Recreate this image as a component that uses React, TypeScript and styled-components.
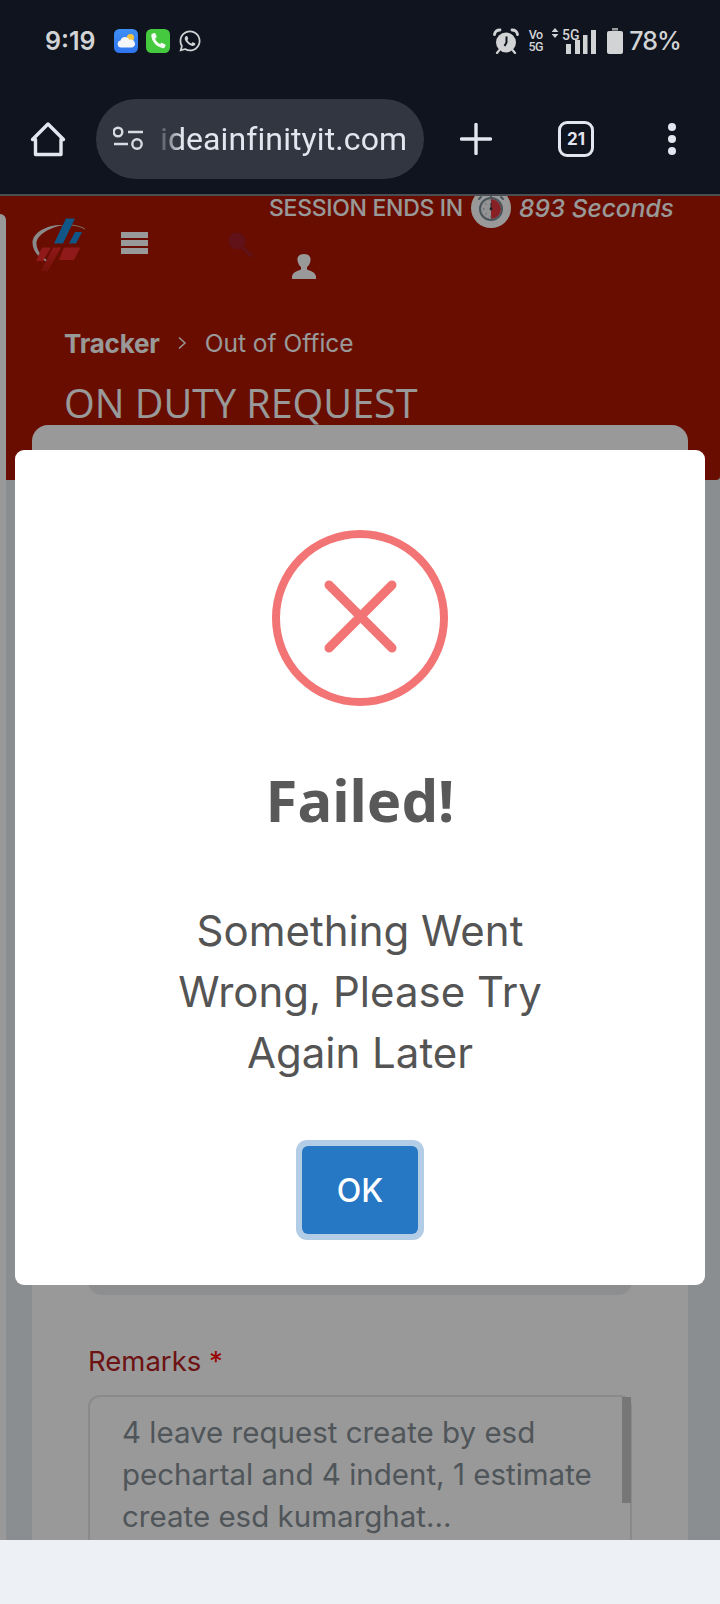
import React from "react";
import styled, { createGlobalStyle } from "styled-components";
import { FaWhatsapp } from "react-icons/fa";

const Global = createGlobalStyle`
  html, body { margin: 0; padding: 0; background: #edf0f4; }
  * { box-sizing: border-box; }
`;

const Screen = styled.div`
  width: 720px;
  height: 1604px;
  display: flex;
  flex-direction: column;
  overflow: hidden;
  font-family: Inter, "Noto Sans", sans-serif;
`;

const Chrome = styled.header`
  position: relative;
  z-index: 2;
  height: 196px;
  flex: none;
  background: #0f141e;
  border-bottom: 2px solid #4a4d52;
`;

const StatusBar = styled.div`
  height: 82px;
  display: flex;
  align-items: center;
  padding: 0 39px 0 45px;
  color: #d2d3d5;
`;

const Clock = styled.span`
  font-size: 25px;
  font-weight: 600;
  width: 52px;
  margin-right: 17px;
  white-space: nowrap;
`;

const AppIcon = styled.svg`
  width: 24px;
  height: 24px;
  margin-right: 8px;
  flex: none;
`;

const WhatsApp = styled(FaWhatsapp)`
  width: 24px;
  height: 24px;
  color: #d2d3d5;
`;

const StatusRight = styled.div`
  margin-left: auto;
  display: flex;
  align-items: center;
`;

const VoStack = styled.div`
  width: 15px;
  margin: 0 9px;
  font-family: Roboto, sans-serif;
  font-size: 12.5px;
  font-weight: 500;
  line-height: 12px;
  display: flex;
  flex-direction: column;
  align-items: center;
  letter-spacing: -0.5px;
`;

const NetIcon = styled.svg`
  width: 44px;
  height: 26px;
  margin-right: 11px;
`;

const BatteryIcon = styled.svg`
  width: 16px;
  height: 26px;
  margin-right: 6px;
`;

const Percent = styled.span`
  font-size: 25px;
  font-weight: 500;
  letter-spacing: -0.9px;
  white-space: nowrap;
`;

const Toolbar = styled.div`
  height: 112px;
  display: flex;
  align-items: center;
  padding: 2px 0 0 28px;
  color: #e3e6ee;
`;

const HomeIcon = styled.svg`
  width: 40px;
  height: 40px;
  margin-right: 28px;
  flex: none;
`;

const UrlPill = styled.div`
  width: 328px;
  height: 80px;
  border-radius: 40px;
  background: #323640;
  display: flex;
  align-items: center;
  padding-left: 17px;
  margin-right: 36px;
  flex: none;
`;

const TuneIcon = styled.svg`
  width: 32px;
  height: 26px;
  margin-right: 15px;
  flex: none;
`;

const UrlText = styled.span`
  font-family: Roboto, sans-serif;
  font-size: 32px;
  letter-spacing: 0.1px;
  color: #e3e6ee;
  white-space: nowrap;
  -webkit-mask-image: linear-gradient(90deg, rgba(0,0,0,.15) 0, #000 22px);
  mask-image: linear-gradient(90deg, rgba(0,0,0,.15) 0, #000 22px);
`;

const PlusIcon = styled.svg`
  width: 32px;
  height: 32px;
  margin-right: 66px;
  flex: none;
`;

const TabCount = styled.div`
  width: 36px;
  height: 36px;
  border: 3.5px solid #e3e6ee;
  border-radius: 9px;
  display: flex;
  align-items: center;
  justify-content: center;
  font-size: 17px;
  font-weight: 700;
  margin-right: 74px;
  flex: none;
`;

const MoreDots = styled.div`
  display: flex;
  flex-direction: column;
  gap: 4px;
`;

const Dot = styled.span`
  width: 8px;
  height: 8px;
  border-radius: 50%;
  background: #e3e6ee;
`;

const Viewport = styled.main`
  flex: 1;
  min-height: 0;
  position: relative;
  background: #e8edf2;
`;

const SideStrip = styled.div`
  position: absolute;
  top: 18px;
  bottom: 0;
  left: 0;
  width: 6px;
  background: #fff;
  border-top-right-radius: 10px;
`;

const Hero = styled.section`
  height: 284px;
  background: #ad1600;
  border-radius: 0 0 4px 4px;
  color: #fff;
`;

const SessionRow = styled.div`
  height: 32px;
  padding: 1px 0 0 269px;
  display: flex;
  align-items: flex-start;
  font-size: 23px;
  font-weight: 500;
  line-height: 22px;
  white-space: nowrap;
`;

const SessionLabel = styled.span`
  width: 202px;
  letter-spacing: -0.3px;
`;

const TimerIcon = styled.svg`
  width: 40px;
  height: 40px;
  flex: none;
  margin: -9px 8px 0 0;
`;

const SessionTime = styled.em`
  font-size: 24.5px;
`;

const NavRow = styled.div`
  display: flex;
  align-items: flex-start;
  padding-left: 32px;
  margin-top: -11px;
  height: 110px;
`;

const Logo = styled.svg`
  width: 54px;
  height: 56px;
  margin-right: 35px;
  flex: none;
`;

const MenuIcon = styled.div`
  width: 27px;
  margin-top: 15px;
  margin-right: 79px;
  display: flex;
  flex-direction: column;
  gap: 2px;
  flex: none;
`;

const MenuBar = styled.span`
  height: 6px;
  background: #fff;
`;

const SearchIcon = styled.svg`
  width: 26px;
  height: 26px;
  margin-top: 14px;
  margin-right: 38px;
  flex: none;
`;

const PersonIcon = styled.svg`
  width: 26px;
  height: 28px;
  margin-top: 36px;
  flex: none;
`;

const Crumbs = styled.nav`
  display: flex;
  align-items: center;
  height: 36px;
  padding-left: 64px;
  font-size: 24.5px;
  margin-top: -2px;
`;

const CrumbRoot = styled.b`
  font-size: 26px;
  font-weight: 700;
  letter-spacing: -0.2px;
`;

const CrumbSep = styled.svg`
  width: 12px;
  height: 14px;
  margin: 0 17px 0 16px;
`;

const PageTitle = styled.h1`
  margin: 20px 0 0 64px;
  font-family: "Open Sans", sans-serif;
  font-weight: 400;
  font-size: 39.5px;
  line-height: 44px;
  white-space: nowrap;
`;

const Card = styled.section`
  position: relative;
  margin: -55px 32px 0;
  height: 1140px;
  background: #fff;
  border-radius: 16px 16px 0 0;
  padding: 30px 56px 0;
`;

const FilledField = styled.div`
  height: 840px;
  background: #e9edf0;
  border-radius: 14px;
`;

const FieldLabel = styled.label`
  display: block;
  margin-top: 49px;
  height: 34px;
  font-size: 27.5px;
  line-height: 34px;
  color: #b52020;
`;

const Required = styled.span`
  color: #ff0000;
`;

const TextBox = styled.div`
  position: relative;
  margin-top: 17px;
  height: 170px;
  border: 2px solid #e6e6e6;
  border-radius: 12px;
  padding: 14px 0 0 32px;
  font-size: 29.5px;
  line-height: 42px;
  color: #848e95;
  white-space: nowrap;
`;

const ScrollThumb = styled.span`
  position: absolute;
  top: 0;
  right: -1px;
  width: 9px;
  height: 106px;
  background: #c6c6c6;
`;

const Backdrop = styled.div`
  position: absolute;
  inset: 0;
  background: rgba(0, 0, 0, 0.4);
  display: flex;
  align-items: center;
  justify-content: center;
  padding-bottom: 1px;
`;

const Modal = styled.div`
  width: 690px;
  height: 835px;
  background: #fff;
  border-radius: 9px;
  display: flex;
  flex-direction: column;
  align-items: center;
  padding-top: 80px;
`;

const ErrorIcon = styled.svg`
  width: 176px;
  height: 176px;
  flex: none;
`;

const ModalTitle = styled.h2`
  margin: 54px 0 0;
  font-family: "Noto Sans", sans-serif;
  font-weight: 700;
  font-size: 58px;
  line-height: 80px;
  color: #595959;
`;

const ModalText = styled.p`
  margin: 60px 0 0;
  font-size: 42px;
  line-height: 61px;
  font-weight: 400;
  text-align: center;
  color: #545454;
`;

const OkRing = styled.div`
  margin-top: 57px;
  padding: 6px;
  background: #b3cde6;
  border-radius: 11px;
`;

const OkButton = styled.button`
  display: block;
  width: 116px;
  height: 88px;
  border: 0;
  border-radius: 6px;
  background: #2778c4;
  color: #fff;
  font-family: Inter, sans-serif;
  font-weight: 500;
  font-size: 32px;
  padding: 0;
`;

const BottomBar = styled.footer`
  position: relative;
  z-index: 2;
  height: 64px;
  flex: none;
  background: #edf0f4;
`;

export default function App() {
  return (
    <Screen>
      <Global />
      <Chrome>
        <StatusBar>
          <Clock>9:19</Clock>
          <AppIcon viewBox="0 0 24 24">
            <defs>
              <linearGradient id="wx" x1="0" y1="0" x2="0" y2="1">
                <stop offset="0" stopColor="#3f8ff5" />
                <stop offset="1" stopColor="#2f74ee" />
              </linearGradient>
            </defs>
            <rect width="24" height="24" rx="5.5" fill="url(#wx)" />
            <circle cx="16.5" cy="8.5" r="3.6" fill="#f9c440" />
            <path d="M7 18.5a3.6 3.6 0 0 1-.5-7.1 4.8 4.8 0 0 1 9-.6 3.9 3.9 0 0 1 2.7 7.7Z" fill="#f3f5f9" />
          </AppIcon>
          <AppIcon viewBox="0 0 24 24">
            <rect width="24" height="24" rx="5.5" fill="#45c93e" />
            <path d="M6.2 4.8l2-.8c.6-.2 1 0 1.200.5l1.200 3c.2.5 0 .9-.4 1.200l-1.100.8c.8 2.400 2.500 4.400 5 5.600l1-1c.4-.4.9-.4 1.300-.2l2.700 1.600c.5.300.6.700.4 1.200l-.9 1.800c-.3.600-.8.800-1.400.700C10.400 18 5.300 12.200 5.300 6c0-.6.300-1 .9-1.200Z" fill="#f4fbf2" />
          </AppIcon>
          <WhatsApp />
          <StatusRight>
            <svg width="26" height="26" viewBox="0 0 26 26">
              <circle cx="13" cy="14.500" r="10" fill="#d2d3d5" />
              <path d="M1.500 6.500C2 3.500 4 2 7 2M24.500 6.500C24 3.500 22 2 19 2" stroke="#d2d3d5" strokeWidth="2.800" fill="none" strokeLinecap="round" />
              <path d="M6 22.500 4 25M20 22.500 22 25" stroke="#d2d3d5" strokeWidth="2.200" strokeLinecap="round" />
              <path d="M13.500 8.500V14.500L11.500 18" stroke="#0f141e" strokeWidth="2" fill="none" />
            </svg>
            <VoStack>
              <span>Vo</span>
              <span>5G</span>
            </VoStack>
            <NetIcon viewBox="0 0 44 26">
              <path d="M3 0 6.500 4H-.5ZM3 10-.5 6H6.500Z" fill="#d2d3d5" />
              <text x="10" y="11.500" fontFamily="Roboto, sans-serif" fontSize="14" fontWeight="500" fill="#d2d3d5">5G</text>
              <rect x="14" y="16" width="5" height="10" fill="#d2d3d5" />
              <rect x="23" y="12" width="5" height="14" fill="#d2d3d5" />
              <rect x="31" y="7" width="4.500" height="19" fill="#d2d3d5" />
              <rect x="39" y="2" width="5" height="24" fill="#d2d3d5" />
            </NetIcon>
            <BatteryIcon viewBox="0 0 16 26">
              <path d="M5 0h6v2.500h-6Z" fill="#9a9b9e" />
              <path d="M2 3h12a2 2 0 0 1 2 2v19a2 2 0 0 1-2 2H2a2 2 0 0 1-2-2V5a2 2 0 0 1 2-2Z" fill="#d2d3d5" />
            </BatteryIcon>
            <Percent>78%</Percent>
          </StatusRight>
        </StatusBar>
        <Toolbar>
          <HomeIcon viewBox="0 0 40 40">
            <path d="M7.500 35.500V20.500H4.500L20 5L35.500 20.500H33V35.500Z" fill="none" stroke="#e3e6ee" strokeWidth="3.400" strokeLinejoin="round" />
          </HomeIcon>
          <UrlPill>
            <TuneIcon viewBox="0 0 32 26">
              <circle cx="5" cy="6" r="4.300" fill="none" stroke="#d8dbe2" strokeWidth="2.400" />
              <path d="M15 6H30M1 18H15" stroke="#d8dbe2" strokeWidth="2.400" />
              <circle cx="24" cy="18" r="4.700" fill="none" stroke="#d8dbe2" strokeWidth="2.400" />
            </TuneIcon>
            <UrlText>ideainfinityit.com</UrlText>
          </UrlPill>
          <PlusIcon viewBox="0 0 32 32">
            <path d="M16 1.500V30.500M1.500 16H30.500" stroke="#e3e6ee" strokeWidth="3.400" strokeLinecap="round" />
          </PlusIcon>
          <TabCount>21</TabCount>
          <MoreDots>
            <Dot />
            <Dot />
            <Dot />
          </MoreDots>
        </Toolbar>
      </Chrome>

      <Viewport>
        <Hero>
          <SessionRow>
            <SessionLabel>SESSION ENDS IN</SessionLabel>
            <TimerIcon viewBox="0 0 40 40">
              <circle cx="20" cy="20" r="20" fill="#fff" />
              <path d="M16 5.500h8M20 5.500v3M10 9l-2 2M30 9l2 2" stroke="#7c8c98" strokeWidth="2" strokeLinecap="round" />
              <circle cx="20" cy="21" r="11" fill="#f4f4f4" stroke="#7c8c98" strokeWidth="2" />
              <path d="M20 11a10 10 0 0 1 0 20Z" fill="#e2383f" />
              <path d="M12 21h1.500M20 28v1.500M20 13v-1.500M14.500 15.500l1 1M14.500 26.500l1-1" stroke="#7c8c98" strokeWidth="1" />
              <path d="M20 15v6" stroke="#33393f" strokeWidth="1" />
              <circle cx="20" cy="21" r="1.400" fill="#33393f" />
            </TimerIcon>
            <SessionTime>893 Seconds</SessionTime>
          </SessionRow>
          <NavRow>
            <Logo viewBox="12 12 54 56">
              <defs>
                <linearGradient id="fade" x1="0" y1="0" x2="0" y2="1">
                  <stop offset="0" stopColor="#f02a2a" />
                  <stop offset="1" stopColor="#c01c10" />
                </linearGradient>
              </defs>
              <path d="M44 20C28 19 13 27 12.500 37C12 46 20 55 30 58C22 52 16 45 16.500 38C17 30 30 22 44 20Z" fill="#e6e6e6" />
              <path d="M44 20C52 19.500 60 21 65 24" fill="none" stroke="#e6e6e6" strokeWidth="0.800" />
              <path d="M46 13.500H55L43 38.500H34Z" fill="#1b8fe0" />
              <path d="M55 27H62L56 38.500H49Z" fill="#1b8fe0" />
              <path d="M22 42.500H31L23 56H16Z" fill="#f02a2a" />
              <path d="M33 42.500H41L28 66H21Z" fill="url(#fade)" />
              <path d="M44 42.500H60.500L54 55H39Z" fill="#f02a2a" />
            </Logo>
            <MenuIcon>
              <MenuBar />
              <MenuBar />
              <MenuBar />
            </MenuIcon>
            <SearchIcon viewBox="0 0 26 26">
              <circle cx="10" cy="10" r="8.500" fill="#a01e28" />
              <path d="M15 16 24 24.500" stroke="#a01e28" strokeWidth="3.600" strokeLinecap="round" />
            </SearchIcon>
            <PersonIcon viewBox="0 0 26 28">
              <path d="M13 1c4.500 0 7 2.500 6.500 6.500-.3 2.500-1.500 5-3.500 6.500v2.500c3 1.500 8 2 9 7v2.500H1V23.500c1-5 6-5.500 9-7V14C8 12.500 7 10 6.500 7.500 6 3.500 8.500 1 13 1Z" fill="#fff" />
            </PersonIcon>
          </NavRow>
          <Crumbs>
            <CrumbRoot>Tracker</CrumbRoot>
            <CrumbSep viewBox="0 0 12 14">
              <path d="M3 1.500 9 7 3 12.500" fill="none" stroke="#fff" strokeWidth="1.500" />
            </CrumbSep>
            <span>Out of Office</span>
          </Crumbs>
          <PageTitle>ON DUTY REQUEST</PageTitle>
        </Hero>
        <Card>
          <FilledField />
          <FieldLabel>
            Remarks <Required>*</Required>
          </FieldLabel>
          <TextBox>
            4 leave request create by esd
            <br />
            pechartal and 4 indent, 1 estimate
            <br />
            create esd kumarghat...
            <ScrollThumb />
          </TextBox>
        </Card>
        <SideStrip />
        <Backdrop>
          <Modal>
            <ErrorIcon viewBox="0 0 176 176">
              <circle cx="88" cy="88" r="84" fill="none" stroke="#f27474" strokeWidth="8" />
              <path d="M57 55 120 118M120 55 57 118" stroke="#f27474" strokeWidth="9" strokeLinecap="round" />
            </ErrorIcon>
            <ModalTitle>Failed!</ModalTitle>
            <ModalText>
              Something Went
              <br />
              Wrong, Please Try
              <br />
              Again Later
            </ModalText>
            <OkRing>
              <OkButton>OK</OkButton>
            </OkRing>
          </Modal>
        </Backdrop>
      </Viewport>
      <BottomBar />
    </Screen>
  );
}
